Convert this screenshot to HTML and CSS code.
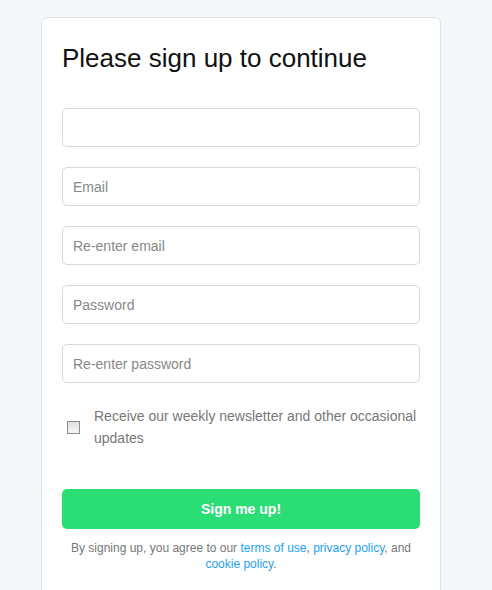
FILE: index.html
```html
<!DOCTYPE html>
<html>
<head>
<meta charset="utf-8">
<link rel="stylesheet" href="styles.css">
</head>
<body>
<div class="card">
  <h1 class="title">Please sign up to continue</h1>
  <form class="form">
    <input class="field" type="text">
    <input class="field" type="text" placeholder="Email">
    <input class="field" type="text" placeholder="Re-enter email">
    <input class="field" type="password" placeholder="Password">
    <input class="field" type="password" placeholder="Re-enter password">
    <label class="check-row">
      <span class="check-box"></span>
      <span class="check-text">Receive our weekly newsletter and other occasional updates</span>
    </label>
    <button class="submit" type="button">Sign me up!</button>
    <p class="terms">By signing up, you agree to our <a href="#">terms of use</a>, <a href="#">privacy policy</a>, and <a href="#">cookie policy</a>.</p>
  </form>
</div>
</body>
</html>
```

FILE: styles.css
```css
html, body {
  margin: 0;
  padding: 0;
  background: #f5f8fa;
  font-family: "Liberation Sans", Arial, sans-serif;
}
body {
  padding-top: 17px;
  padding-left: 41px;
}
.card {
  width: 400px;
  height: 620px;
  box-sizing: border-box;
  background: #fff;
  border: 1px solid #dde1e4;
  border-radius: 6px;
  padding: 25px 20px 20px 20px;
}
.title {
  margin: 0;
  font-size: 26px;
  font-weight: normal;
  line-height: 30px;
  color: #111;
}
.form {
  display: flex;
  flex-direction: column;
  margin-top: 35px;
}
.field {
  height: 39px;
  box-sizing: border-box;
  border: 1px solid #d9d9d9;
  border-radius: 5px;
  padding: 0 10px;
  margin: 0 0 20px 0;
  font-family: "Liberation Sans", Arial, sans-serif;
  font-size: 14px;
  color: #333;
  outline: none;
}
.field::placeholder {
  color: #888;
}
.check-row {
  display: flex;
  align-items: center;
  margin-top: 2px;
}
.check-box {
  width: 11px;
  height: 11px;
  margin-left: 5px;
  border: 1px solid #8c8c8c;
  background: linear-gradient(#dedede, #f6f6f6);
  flex: none;
}
.check-text {
  margin-left: 14px;
  font-size: 14px;
  line-height: 22px;
  color: #777;
}
.submit {
  margin-top: 40px;
  height: 40px;
  border: none;
  border-radius: 5px;
  background: #2ade75;
  color: #fff;
  font-family: "Liberation Sans", Arial, sans-serif;
  font-weight: bold;
  font-size: 14px;
}
.terms {
  margin: 11px 0 0 0;
  text-align: center;
  font-size: 12px;
  line-height: 16px;
  color: #777;
}
.terms a {
  color: #1da1f2;
  text-decoration: none;
}
```
